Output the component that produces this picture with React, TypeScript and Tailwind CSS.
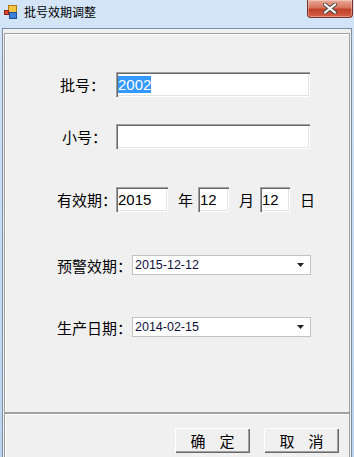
import React from "react";

const cjk = "font-['Noto_Sans_CJK_SC','Noto_Sans',sans-serif]";
const latin = "font-['Liberation_Sans',Arial,sans-serif]";

// classic sunken (Fixed3D) text box
const sunken =
  "bg-white shadow-[inset_1px_1px_0_#a0a0a0,inset_2px_2px_0_#696969,inset_-1px_-1px_0_#ffffff,inset_-2px_-2px_0_#e3e3e3]";

function TextBox({ w, value, selected }: { w: string; value?: string; selected?: boolean }) {
  return (
    <div className={`${sunken} ${w} h-[25px] flex items-center pl-[2px] ${latin} text-[15px] text-black`}>
      {value &&
        (selected ? (
          <span className="bg-[#3399ff] text-white leading-[17px]">{value}</span>
        ) : (
          <span className="leading-[17px]">{value}</span>
        ))}
    </div>
  );
}

function Combo({ value }: { value: string }) {
  return (
    <div className="w-[179px] h-[20px] bg-white border border-[#c3c3c3] flex items-center justify-between pl-[2px] pr-[6px]">
      <span className={`${latin} text-[12.5px] text-[#101040] leading-none`}>{value}</span>
      <svg width="7" height="4" viewBox="0 0 7 4">
        <path d="M0 0h7L3.5 4z" fill="#222" />
      </svg>
    </div>
  );
}

function Label({ text, w }: { text: string; w: string }) {
  return <div className={`${w} ${cjk} text-[15px] leading-none text-black whitespace-nowrap`}>{text}</div>;
}

function AppIcon() {
  return (
    <svg width="14" height="14" viewBox="0 0 14 14">
      <rect x="4.5" y="0.5" width="8" height="7" fill="#f6c343" stroke="#b07b12" />
      <rect x="5.5" y="7.5" width="7" height="6" fill="#3f7fd6" stroke="#1f4f96" />
      <rect x="0.5" y="5.5" width="4" height="4" fill="#e0422a" stroke="#8f1f10" />
    </svg>
  );
}

function CloseButton() {
  return (
    <div className="w-[46px] h-[18px] rounded-b-[4px] border border-t-0 border-[#7a3022] bg-[linear-gradient(to_bottom,#e9a898_0%,#d8735d_45%,#c2412a_55%,#d35f45_100%)] flex items-center justify-center shadow-[inset_0_0_0_1px_rgba(255,255,255,0.35)]">
      <svg width="14" height="11" viewBox="0 0 14 11">
        <path d="M2 1.5l10 8M12 1.5l-10 8" stroke="#4a4a4a" strokeWidth="4" strokeLinecap="round" />
        <path d="M2 1.5l10 8M12 1.5l-10 8" stroke="#ffffff" strokeWidth="2.2" strokeLinecap="round" />
      </svg>
    </div>
  );
}

function Button({ a, b }: { a: string; b: string }) {
  return (
    <div
      className={`w-[75px] h-[25px] bg-[#f0f0f0] flex items-center justify-center gap-[14px] ${cjk} text-[15px] leading-none text-black shadow-[inset_1px_1px_0_#ffffff,inset_-1px_-1px_0_#696969,inset_-2px_-2px_0_#a0a0a0]`}
    >
      <span>{a}</span>
      <span>{b}</span>
    </div>
  );
}

export default function App() {
  return (
    <div className="w-[354px] h-[457px] overflow-hidden flex flex-col bg-[linear-gradient(to_bottom,#d3e5f7,#bcd4ef)]">
      {/* title bar */}
      <div className="h-[28px] shrink-0 flex items-start pl-[4px]">
        <div className="mt-[5px]">
          <AppIcon />
        </div>
        <div className={`ml-[6px] mt-[4px] ${cjk} text-[12px] leading-[16px] text-black`}>批号效期调整</div>
        <div className="ml-auto mr-[1px]">
          <CloseButton />
        </div>
      </div>

      {/* client area */}
      <div className="flex-1 min-h-0 mx-[2px] border-t border-l border-r border-[#7b8ea5] bg-[#f0f0f0] pt-[4px] pl-[1px] pr-[1px] flex flex-col">
        <div className="h-[380px] shrink-0 border border-[#a0a0a0] shadow-[inset_1px_1px_0_#ffffff] flex flex-col">
          <div className="flex items-center pl-[55px] mt-[38px]">
            <Label text="批号：" w="w-[56px]" />
            <TextBox w="w-[194px]" value="2002" selected />
          </div>

          <div className="flex items-center pl-[57px] mt-[27px]">
            <Label text="小号：" w="w-[54px]" />
            <TextBox w="w-[194px]" />
          </div>

          <div className="flex items-center pl-[52px] mt-[38px]">
            <Label text="有效期：" w="w-[59px]" />
            <TextBox w="w-[52px]" value="2015" />
            <span className={`ml-[10px] mr-[5px] ${cjk} text-[15px] leading-none`}>年</span>
            <TextBox w="w-[31px]" value="12" />
            <span className={`ml-[10px] mr-[6px] ${cjk} text-[15px] leading-none`}>月</span>
            <TextBox w="w-[30px]" value="12" />
            <span className={`ml-[10px] ${cjk} text-[15px] leading-none`}>日</span>
          </div>

          <div className="flex items-center pl-[52px] mt-[43px]">
            <Label text="预警效期：" w="w-[75px]" />
            <Combo value="2015-12-12" />
          </div>

          <div className="flex items-center pl-[52px] mt-[42px]">
            <Label text="生产日期：" w="w-[75px]" />
            <Combo value="2014-02-15" />
          </div>
        </div>

        <div className="h-[70px] shrink-0 border border-[#a0a0a0] shadow-[inset_1px_1px_0_#ffffff] flex justify-end items-start gap-[14px] pt-[14px] pr-[10px]">
          <Button a="确" b="定" />
          <Button a="取" b="消" />
        </div>
      </div>
    </div>
  );
}
